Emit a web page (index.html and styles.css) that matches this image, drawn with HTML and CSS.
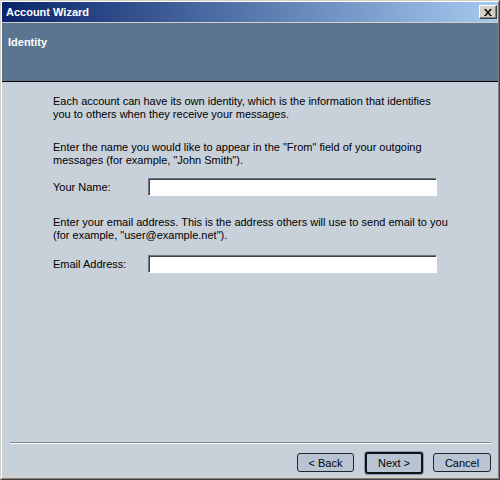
FILE: index.html
```html
<!DOCTYPE html>
<html lang="en">
<head>
    <meta charset="UTF-8">
    <title>Account Wizard</title>
    <link rel="stylesheet" href="styles.css">
</head>
<body>
    <div class="window">
        <div class="frame">
            <div class="titlebar">
                <span class="title">Account Wizard</span>
                <button class="close" type="button" aria-label="Close">
                    <svg width="8" height="7" viewBox="0 0 8 7">
                        <path d="M0 0h2l2 2.5L6 0h2L5 3.5 8 7H6L4 4.5 2 7H0l3-3.5z" fill="#000"/>
                    </svg>
                </button>
            </div>

            <div class="header">
                <h1>Identity</h1>
            </div>

            <div class="content">
                <div class="page">
                    <p class="intro">Each account can have its own identity, which is the information that identifies you to others when they receive your messages.</p>

                    <p>Enter the name you would like to appear in the "From" field of your outgoing messages (for example, "John Smith").</p>
                    <div class="field name-field">
                        <label for="name">Your Name:</label>
                        <input type="text" id="name">
                    </div>

                    <p class="email-text">Enter your email address. This is the address others will use to send email to you (for example, "user@example.net").</p>
                    <div class="field email-field">
                        <label for="email">Email Address:</label>
                        <input type="text" id="email">
                    </div>
                </div>

                <div class="footer">
                    <div class="separator"></div>
                    <div class="buttons">
                        <button type="button" class="btn btn-back">&lt; Back</button>
                        <button type="button" class="btn btn-next">Next &gt;</button>
                        <button type="button" class="btn btn-cancel">Cancel</button>
                    </div>
                </div>
            </div>
        </div>
    </div>
</body>
</html>
```

FILE: styles.css
```css
/* General */
body {
    margin: 0;
    padding: 0;
    font-family: 'Liberation Sans', Arial, sans-serif;
    font-size: 11px;
    color: #000;
    background: #d4d0c8;
}

/* Window frame */
.window {
    width: 500px;
    height: 480px;
    box-sizing: border-box;
    border: 1px solid;
    border-color: #d4d0c8 #404040 #404040 #d4d0c8;
}

.frame {
    height: 100%;
    box-sizing: border-box;
    display: flex;
    flex-direction: column;
    border: 1px solid;
    border-color: #fff #808080 #808080 #fff;
    background: #d4d0c8;
    padding-bottom: 2px;
}

/* Title bar */
.titlebar {
    height: 20px;
    margin-bottom: 1px;
    display: flex;
    align-items: center;
    justify-content: space-between;
    padding: 0 1px 0 4px;
    background: linear-gradient(to right, #0a246a, #a6caf0);
}

.title {
    color: #fff;
    font-weight: bold;
    font-size: 11px;
}

.close {
    width: 18px;
    height: 14px;
    box-sizing: border-box;
    padding: 0;
    display: flex;
    align-items: center;
    justify-content: center;
    background: #d4d0c8;
    border: 1px solid;
    border-color: #fff #404040 #404040 #fff;
    box-shadow: inset -1px -1px #808080;
}

/* Page header */
.header {
    height: 58px;
    background: #5a7590;
    border-bottom: 1px solid #000;
}

.header h1 {
    margin: 0;
    padding: 12px 0 0 6px;
    color: #fff;
    font-size: 11px;
    line-height: 14px;
    font-weight: bold;
}

/* Content */
.content {
    flex: 1;
    display: flex;
    flex-direction: column;
    background: #c8d0da;
}

.page {
    flex: 1;
    padding: 13px 0 0 51px;
    width: 397px;
}

.page p {
    margin: 0;
    line-height: 13px;
}

.intro {
    margin-bottom: 20px !important;
}

.email-text {
    margin-top: 20px !important;
}

.field {
    display: flex;
    align-items: center;
}

.name-field {
    margin-top: 11px;
}

.email-field {
    margin-top: 13px;
}

.field label {
    width: 95px;
}

.field input {
    width: 289px;
    height: 18px;
    box-sizing: border-box;
    margin: 0;
    padding: 0 2px;
    background: #fff;
    border: 1px solid;
    border-color: #6c7480 #fff #fff #6c7480;
    box-shadow: inset 1px 1px #3c424a;
    font: inherit;
}

/* Footer */
.separator {
    margin: 0 7px 0 8px;
    height: 1px;
    background: #7e8894;
    border-bottom: 1px solid #fff;
}

.buttons {
    height: 23px;
    padding: 7px 7px 2px 0;
    display: flex;
    align-items: center;
    justify-content: flex-end;
}

.btn {
    height: 19px;
    box-sizing: border-box;
    padding: 0;
    background: #b8c4d2;
    border: 1px solid #1e252c;
    border-radius: 3px;
    font: inherit;
    color: #000;
}

.btn-back {
    width: 57px;
}

.btn-next {
    width: 58px;
    height: 22px;
    margin-left: 11px;
    border: 2px solid #101418;
    box-shadow: 0 0 0 1px #8a9aac;
}

.btn-cancel {
    width: 58px;
    margin-left: 10px;
}
```
